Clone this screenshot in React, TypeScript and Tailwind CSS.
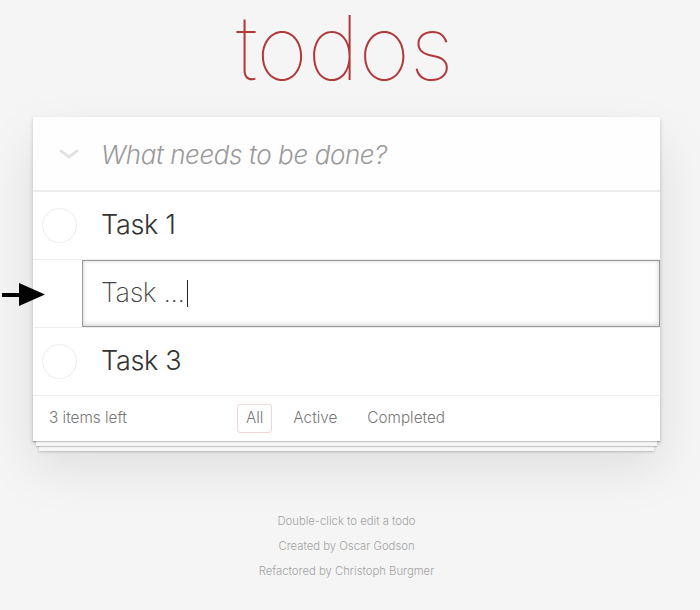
import React from "react";

const font = { fontFamily: "Inter, 'Helvetica Neue', Helvetica, Arial, sans-serif" };

function Circle() {
  return <div className="w-[35px] h-[35px] rounded-full border border-[#ededed] shrink-0" />;
}

function TodoRow({ label }: { label: string }) {
  return (
    <div className="h-[68px] flex items-center border-b border-[#ededed] bg-white">
      <div className="w-[68px] pl-[9px] flex items-center">
        <Circle />
      </div>
      <span className="text-[27px] font-light text-[#333] tracking-[-0.3px]">{label}</span>
    </div>
  );
}

export default function App() {
  return (
    <div className="min-h-[610px] w-[700px] bg-[#f5f5f5] overflow-hidden" style={font}>
      <div className="relative ml-[33px] w-[627px]">
        <div className="h-[117px] flex flex-col">
          <h1 className="-mt-[7px] text-center text-[89px] leading-[110px] font-thin text-[#b03a3a] tracking-[-0.5px] pr-[4px]">
            todos
          </h1>
        </div>

        {/* arrow pointing at edit row */}
        <svg
          className="absolute left-[-31px] top-[283px]"
          width="44"
          height="24"
          viewBox="0 0 44 24"
        >
          <rect x="0" y="10" width="20" height="4" fill="#000" />
          <polygon points="17,0 43,11.5 17,23" fill="#000" />
        </svg>

        <div className="bg-white shadow-[0_2px_4px_0_rgba(0,0,0,0.2),0_25px_50px_0_rgba(0,0,0,0.1)]">
          {/* header */}
          <div className="h-[75px] flex items-center border-b-2 border-[#ececec] bg-[#fefefe]">
            <div className="w-[68px] flex justify-center pl-[4px]">
              <svg width="20" height="10" viewBox="0 0 20 10">
                <polyline
                  points="2,2 10,8 18,2"
                  fill="none"
                  stroke="#e3e3e3"
                  strokeWidth="3"
                  strokeLinecap="round"
                  strokeLinejoin="round"
                />
              </svg>
            </div>
            <span className="text-[26px] italic font-light text-[#9a9a9a] tracking-[-0.4px] pt-[2px]">What needs to be done?</span>
          </div>

          <TodoRow label="Task 1" />

          {/* editing row */}
          <div className="h-[68px] flex border-b border-[#ededed] bg-white">
            <div className="ml-[49px] flex-1 flex items-center border border-[#999] shadow-[inset_0_-1px_5px_0_rgba(0,0,0,0.2)] pl-[18px]">
              <span className="text-[27px] font-extralight text-[#444] tracking-[-0.4px]">Task ...</span>
              <span className="ml-[2px] w-px h-[27px] bg-[#222]" />
            </div>
          </div>

          <TodoRow label="Task 3" />

          {/* footer */}
          <div className="relative h-[45px] flex items-center px-[16px] text-[15.3px] font-light text-[#777] shadow-[0_1px_1px_rgba(0,0,0,0.2),0_8px_0_-3px_#f6f6f6,0_9px_1px_-3px_rgba(0,0,0,0.2),0_16px_0_-6px_#f6f6f6,0_17px_2px_-6px_rgba(0,0,0,0.2)] bg-white">
            <span>3 items left</span>
            <div className="absolute inset-0 flex items-center justify-center gap-[12px] pr-[2px]">
              <span className="px-[8px] h-[29px] flex items-center border border-[rgba(175,47,47,0.2)] rounded-[3px]">All</span>
              <span className="px-[8px] h-[29px] flex items-center border border-transparent">Active</span>
              <span className="px-[8px] h-[29px] flex items-center border border-transparent">Completed</span>
            </div>
          </div>
        </div>

        <div className="mt-[68px] text-center text-[11.3px] leading-[25px] font-light text-[#a3a3a3]">
          <p>Double-click to edit a todo</p>
          <p>Created by Oscar Godson</p>
          <p>Refactored by Christoph Burgmer</p>
        </div>
      </div>
    </div>
  );
}
